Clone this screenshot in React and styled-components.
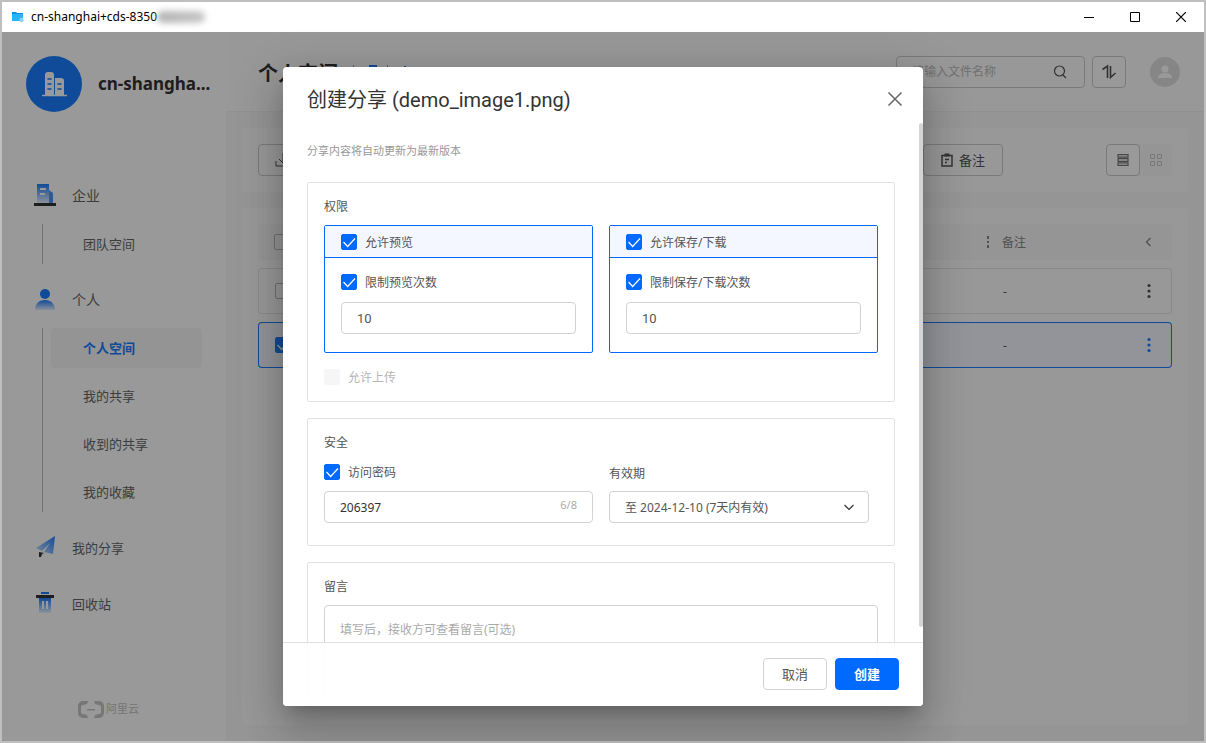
import React from "react";
import styled, { createGlobalStyle, css } from "styled-components";

const blue = "#006aff";
const dimBlue = "#1b7dff";

const Global = createGlobalStyle`
  *, *::before, *::after { box-sizing: border-box; }
  body {
    margin: 0;
    font-family: "Noto Sans", "Noto Sans CJK SC", sans-serif;
    font-size: 12px;
    color: #555;
  }
  button, input, select, textarea { font: inherit; color: inherit; }
  button { cursor: pointer; padding: 0; }
`;

/* ---------- window ---------- */
const Window = styled.div`
  display: flex;
  flex-direction: column;
  height: 100vh;
  border: 2px solid #bfbfbf;
  background: #fff;
`;
const TitleBar = styled.header`
  display: flex;
  align-items: center;
  flex: none;
  height: 30px;
  padding-left: 10px;
  color: #000;
`;
const WindowName = styled.span`
  margin-left: 7px;
  line-height: 20px;
`;
const Redacted = styled.span`
  width: 48px;
  height: 12px;
  border-radius: 6px;
  background: linear-gradient(90deg, #b4b4b4, #c6c6c6);
  filter: blur(3px);
`;
const WindowControls = styled.div`
  display: flex;
  margin-left: auto;
`;
const WindowButton = styled.button`
  display: grid;
  place-items: center;
  width: 46px;
  height: 30px;
  border: 0;
  background: none;
`;
const Body = styled.div`
  position: relative;
  display: flex;
  flex: 1;
  min-height: 0;
`;

/* ---------- sidebar ---------- */
const Sidebar = styled.aside`
  display: flex;
  flex-direction: column;
  flex: none;
  width: 224px;
  padding: 24px 24px 20px;
  background: #fff;
`;
const Account = styled.div`
  display: flex;
  align-items: center;
  gap: 16px;
  margin-bottom: 64px;
`;
const Badge = styled.span`
  display: grid;
  place-items: center;
  flex: none;
  width: 56px;
  height: 56px;
  border-radius: 50%;
  background: ${dimBlue};
`;
const AccountName = styled.strong`
  font-size: 17px;
  line-height: 24px;
  white-space: nowrap;
  color: #333;
`;
const NavLink = styled.a`
  display: flex;
  align-items: center;
  height: 40px;
  padding: 0 0 2px 6px;
  gap: 14px;
  font-size: ${(p) => (p.$large ? "14px" : "13px")};
  color: #666;
  text-decoration: none;
  & > svg { flex: none; }
`;
const SubNav = styled.div`
  display: flex;
  flex-direction: column;
  gap: 8px;
  margin: 8px 0 16px 16px;
  padding-left: 8px;
  border-left: 1px solid #bbb;
`;
const SubLink = styled.a`
  display: flex;
  align-items: center;
  height: 40px;
  padding: 0 0 2px 32px;
  border-radius: 4px;
  font-size: 13px;
  color: #666;
  text-decoration: none;
  ${(p) =>
    p.$active &&
    css`
      background: #f7f7f7;
      color: ${dimBlue};
      font-weight: 700;
    `}
`;
const NavSpacer = styled.div`
  height: 16px;
`;
const Brand = styled.div`
  display: flex;
  align-items: center;
  gap: 2px;
  margin-top: auto;
  padding-left: 52px;
  font-size: 11px;
  line-height: 24px;
  color: #c6c6c6;
`;

/* ---------- main area ---------- */
const Main = styled.main`
  display: flex;
  flex-direction: column;
  flex: 1;
  min-width: 0;
  background: #f8f8f8;
`;
const PageHeader = styled.div`
  display: flex;
  align-items: center;
  flex: none;
  height: 80px;
  padding: 0 24px 0 32px;
  border-bottom: 1px solid #f2f2f2;
  background: #fdfdfd;
`;
const PageTitle = styled.h1`
  margin: 0;
  padding-top: 4px;
  font-size: 20px;
  line-height: 28px;
  font-weight: 700;
  color: #333;
`;
const Search = styled.label`
  display: flex;
  align-items: center;
  width: 189px;
  height: 32px;
  margin-left: auto;
  padding: 0 16px 0 15px;
  border: 1px solid #ccc;
  border-radius: 4px;
  color: #555;
`;
const SearchInput = styled.input`
  flex: 1;
  min-width: 0;
  padding: 0;
  border: 0;
  outline: 0;
  background: none;
  &::placeholder { color: #bbb; opacity: 1; }
`;
const IconButton = styled.button`
  display: grid;
  place-items: center;
  width: 34px;
  height: 32px;
  flex: ${(p) => (p.$plain ? "1" : "none")};
  border: 1px solid ${(p) => (p.$plain ? "transparent" : "#ccc")};
  border-radius: 4px;
  background: ${(p) => (p.$plain ? "none" : "#fff")};
`;
const Avatar = styled.span`
  display: grid;
  place-items: center;
  width: 30px;
  height: 30px;
  border-radius: 50%;
  background: #e0e0e0;
`;
const HeaderTools = styled.div`
  display: flex;
  align-items: center;
  gap: 24px;
  margin-left: 7px;
`;
const Panels = styled.div`
  display: flex;
  flex-direction: column;
  flex: 1;
  gap: 16px;
  padding: 16px;
`;
const Panel = styled.section`
  padding: 16px;
  border-radius: 4px;
  background: #fefefe;
  flex: ${(p) => (p.$grow ? 1 : "none")};
`;
const Tools = styled.div`
  display: flex;
  align-items: center;
`;
const ToolButton = styled.button`
  display: flex;
  align-items: center;
  gap: 5px;
  width: 80px;
  height: 32px;
  padding: 0 16px;
  margin-left: ${(p) => (p.$end ? "auto" : 0)};
  border: 1px solid #ccc;
  border-radius: 4px;
  background: none;
  font-size: 13px;
  line-height: 20px;
  color: #555;
`;
const ViewSwitch = styled.div`
  display: flex;
  margin-left: 103px;
  width: 66px;
  border-radius: 4px;
  background: #f8f8f8;
`;
const FileTable = styled.table`
  width: 100%;
  margin-top: -8px;
  border-collapse: separate;
  border-spacing: 0 8px;
  table-layout: fixed;
`;
const Cell = styled.td`
  width: ${(p) => p.$w || "auto"};
  height: 46px;
  padding: 0 0 0 ${(p) => p.$pad || "0"};
  border: 0 solid ${(p) => (p.$active ? dimBlue : "#e6e6e6")};
  border-width: 1px 0;
  background: ${(p) => (p.$active ? "#f4f7ff" : "none")};
  color: ${(p) => (p.$active ? dimBlue : "#555")};
  &:first-child { border-left-width: 1px; border-radius: 4px 0 0 4px; }
  &:last-child { border-right-width: 1px; border-radius: 0 4px 4px 0; }
`;
const HeadCell = styled.th`
  width: ${(p) => p.$w || "auto"};
  height: 36px;
  padding: 0 0 0 ${(p) => p.$pad || "0"};
  background: #f8f8f8;
  font-weight: 400;
  text-align: left;
  color: #888;
  &:first-child { border-radius: 4px 0 0 4px; }
  &:last-child { border-radius: 0 4px 4px 0; }
`;
const CellLine = styled.span`
  display: flex;
  align-items: center;
  gap: 12px;
  color: ${(p) => (p.$dark ? "#555" : "inherit")};
`;
const CellButton = styled.button`
  display: grid;
  place-items: center;
  width: 100%;
  height: 24px;
  border: 0;
  background: none;
`;

/* ---------- dialog ---------- */
const Backdrop = styled.div`
  position: absolute;
  inset: 0;
  display: flex;
  justify-content: center;
  padding: 35px 16px;
  background: rgba(0, 0, 0, 0.4);
`;
const Dialog = styled.section`
  position: relative;
  display: flex;
  flex-direction: column;
  width: 100%;
  max-width: 640px;
  padding-bottom: 8px;
  border-radius: 4px;
  background: #fff;
  box-shadow: 0 11px 15px -7px rgba(0, 0, 0, 0.2), 0 24px 38px 3px rgba(0, 0, 0, 0.14),
    0 9px 46px 8px rgba(0, 0, 0, 0.12);
`;
const DialogHeader = styled.header`
  display: flex;
  align-items: center;
  justify-content: space-between;
  flex: none;
  height: 56px;
  padding: 8px 20px 0 24px;
`;
const DialogTitle = styled.h2`
  margin: 0;
  padding-top: 2px;
  font-family: Roboto, "Noto Sans CJK SC", sans-serif;
  font-size: 20px;
  line-height: 28px;
  font-weight: 400;
  color: #333;
`;
const CloseButton = styled.button`
  display: grid;
  place-items: center;
  width: 16px;
  height: 24px;
  border: 0;
  background: none;
`;
const DialogBody = styled.div`
  flex: 1;
  min-height: 0;
  overflow-y: auto;
  scrollbar-width: none;
  padding: 16px 28px 0 24px;
`;
const ScrollThumb = styled.span`
  position: absolute;
  top: 56px;
  right: 0;
  bottom: 79px;
  width: 4px;
  border-radius: 2px;
  background: #d4d4d4;
`;
const Tip = styled.p`
  margin: 0 0 19px;
  font-size: 11px;
  line-height: 24px;
  color: #999;
`;
const Group = styled.fieldset`
  min-width: 0;
  margin: 0 0 16px;
  padding: 14px 16px 13px;
  border: 1px solid #e2e2e2;
  border-radius: 2px;
`;
const GroupTitle = styled.h3`
  display: block;
  margin: 0 0 8px;
  font-size: 12px;
  line-height: 20px;
  font-weight: 400;
  color: #555;
`;
const Columns = styled.div`
  display: grid;
  grid-template-columns: 1fr 1fr;
  gap: 16px;
  margin-bottom: ${(p) => (p.$form ? "9px" : "13px")};
`;
const Option = styled.div`
  border: 1px solid ${blue};
  border-radius: 2px;
`;
const OptionHead = styled.div`
  display: flex;
  align-items: center;
  height: 32px;
  padding: 0 16px;
  border-bottom: 1px solid ${blue};
  background: #f4f7ff;
`;
const OptionBody = styled.div`
  padding: 13px 16px 18px;
`;
const CheckLabel = styled.label`
  display: flex;
  align-items: center;
  gap: 8px;
  height: 22px;
  line-height: 22px;
  color: ${(p) => (p.$off ? "#b5b5b5" : "#555")};
`;
const CheckText = styled.span`
  padding-top: 2px;
`;
const CheckBox = styled.span`
  position: relative;
  display: block;
  flex: none;
  width: 16px;
  height: 16px;
  & > svg {
    position: absolute;
    inset: 0;
    pointer-events: none;
  }
`;
const CheckInput = styled.input`
  display: block;
  appearance: none;
  width: 16px;
  height: 16px;
  margin: 0;
  border: 1px solid #bbb;
  border-radius: 2px;
  &:checked { border-color: ${(p) => p.$tone}; background: ${(p) => p.$tone}; }
  &:disabled { border-color: #f6f6f6; background: #f6f6f6; }
`;
const Field = styled.div`
  position: relative;
  width: 100%;
  margin-top: 9px;
`;
const TextInput = styled.input`
  display: block;
  width: 100%;
  height: 32px;
  padding: 0 15px;
  border: 1px solid #d2d2d2;
  border-radius: 4px;
  outline: 0;
  background: #fff;
  color: #333;
`;
const CountInput = styled(TextInput)`
  font-family: Roboto, sans-serif;
  font-size: 13px;
  color: #555;
`;
const Counter = styled.span`
  position: absolute;
  top: 4px;
  right: 16px;
  font-size: 11px;
  line-height: 20px;
  color: #aaa;
`;
const SelectField = styled(Field)`
  max-width: 260px;
  & > svg {
    position: absolute;
    top: 10px;
    right: 14px;
    pointer-events: none;
  }
`;
const Select = styled.select`
  display: block;
  appearance: none;
  width: 100%;
  height: 32px;
  padding: 0 32px 0 15px;
  border: 1px solid #d2d2d2;
  border-radius: 4px;
  background: #fff;
`;
const FieldLabel = styled.label`
  display: flex;
  height: 22px;
  line-height: 22px;
`;
const FormColumns = styled(Columns)`
  ${Field}, ${SelectField} { margin-top: 8px; }
`;
const Message = styled.textarea`
  display: block;
  width: 100%;
  height: 120px;
  padding: 14px 15px;
  border: 1px solid #d2d2d2;
  border-radius: 4px;
  resize: none;
  line-height: 20px;
  &::placeholder { color: #aaa; opacity: 1; }
`;
const DialogFooter = styled.footer`
  position: absolute;
  left: 0;
  right: 0;
  bottom: 0;
  display: flex;
  justify-content: flex-end;
  gap: 8px;
  height: 64px;
  padding: 15px 24px;
  border-top: 1px solid #e0e0e0;
  border-radius: 0 0 4px 4px;
  background: rgba(255, 255, 255, 0.9);
`;
const Action = styled.button`
  width: 64px;
  height: 32px;
  padding-bottom: 2px;
  border: 1px solid ${(p) => (p.$primary ? blue : "#d2d2d2")};
  border-radius: 4px;
  background: ${(p) => (p.$primary ? blue : "#fff")};
  color: ${(p) => (p.$primary ? "#fff" : "#555")};
  font-size: 13px;
  font-weight: ${(p) => (p.$primary ? 700 : 400)};
`;

/* ---------- drawings ---------- */
const Stroke = ({ size = 16, width = 1, children, color = "currentColor" }) => (
  <svg width={size} height={size} viewBox={`0 0 ${size} ${size}`} fill="none" stroke={color} strokeWidth={width} aria-hidden="true">
    {children}
  </svg>
);
const Fade = ({ id }) => (
  <linearGradient id={id} x1="0" y1="0" x2="0" y2="1">
    <stop offset="0" stopColor={dimBlue} />
    <stop offset="1" stopColor={dimBlue} stopOpacity="0.1" />
  </linearGradient>
);
const FolderIcon = () => (
  <svg width="12" height="12" viewBox="0 0 12 12" aria-hidden="true">
    <path d="M0 1h4l1 1h6v3H0z" fill="#0b8fe8" />
    <path d="M0 3h11v7H0z" fill="#29b3fb" />
    <circle cx="9.5" cy="9" r="2.2" fill="#8fd0ff" />
  </svg>
);
const CompanyIcon = () => (
  <svg width="26" height="26" viewBox="0 0 26 26" fill="none" stroke="#fff" aria-hidden="true">
    <path d="M4 24V4a3 3 0 0 1 3-3h3a3 3 0 0 1 3 3v20zM14 24V7h6a3 3 0 0 1 3 3v14z" fill="#fff" stroke="none" />
    <path d="M1 24.500h25" strokeWidth="1.500" />
    <path d="M13.500 7v16" stroke={dimBlue} />
    <path d="M7 8h3M7 13h3M7 18h3M17 13h3M17 18h3" stroke={dimBlue} strokeWidth="1.600" strokeLinecap="round" />
  </svg>
);
const EnterpriseIcon = () => (
  <svg width="26" height="24" viewBox="0 0 26 24" aria-hidden="true">
    <defs><Fade id="ent" /></defs>
    <path d="M17 7l4 3v10h-4z" fill={dimBlue} opacity=".8" />
    <path d="M5 1h12v19H5z" fill="url(#ent)" />
    <path d="M8 5h6v2H8zM8 10h5v2H8z" fill="#fff" />
    <path d="M2 20h22v3H2z" fill="#333" />
  </svg>
);
const PersonIcon = () => (
  <svg width="26" height="24" viewBox="0 0 26 24" aria-hidden="true">
    <defs><Fade id="per" /></defs>
    <circle cx="13" cy="7" r="5" fill={dimBlue} />
    <path d="M3 23c0-6 4-10 10-10s10 4 10 10z" fill="url(#per)" />
  </svg>
);
const PlaneIcon = () => (
  <svg width="26" height="24" viewBox="0 0 26 24" aria-hidden="true">
    <defs>
      <linearGradient id="pla" x1="1" y1="0" x2="0" y2="1">
        <stop offset="0" stopColor={dimBlue} />
        <stop offset="1" stopColor={dimBlue} stopOpacity="0.2" />
      </linearGradient>
    </defs>
    <path d="M23 1L4 13l6 3L18 8l-6 9 9 2z" fill="url(#pla)" />
    <path d="M7 17l5 1-2 1-1 3H7z" fill="#333" />
  </svg>
);
const TrashIcon = () => (
  <svg width="26" height="24" viewBox="0 0 26 24" aria-hidden="true">
    <defs><Fade id="tra" /></defs>
    <path d="M9 1h8v2H9z" fill={dimBlue} />
    <path d="M4 4h18v3H4z" fill="#333" />
    <path d="M7 7h12v15H7z" fill="url(#tra)" />
    <path d="M11 10v8M15 10v8" stroke="#fff" strokeWidth="2" />
  </svg>
);
const CloudLogo = () => (
  <svg width="26" height="17" viewBox="0 0 26 17" aria-hidden="true">
    <g fill="#c6c6c6">
      <path d="M10 0H5a5 5 0 0 0-5 5v7a5 5 0 0 0 5 5h5l-1-3-4-1a2 2 0 0 1-2-2V6a2 2 0 0 1 2-2l4-1z" />
      <path d="M16 0h5a5 5 0 0 1 5 5v7a5 5 0 0 1-5 5h-5l1-3 4-1a2 2 0 0 0 2-2V6a2 2 0 0 0-2-2l-4-1z" />
      <path d="M9 8h8v1.500H9z" />
    </g>
  </svg>
);
const SortIcon = () => (
  <Stroke size={16} width={1.6}>
    <path d="M1.500 5.500L6.500 2v12M9.500 2v11.500L14.500 9" />
  </Stroke>
);
const Dots = ({ small }) => (
  <svg width="4" height="16" viewBox="0 0 4 16" fill="currentColor" aria-hidden="true">
    {small ? (
      <path d="M1 2h2v3H1zM1 7h2v2H1zM1 11h2v3H1z" />
    ) : (
      <>
        <circle cx="2" cy="2.500" r="1.600" />
        <circle cx="2" cy="8" r="1.600" />
        <circle cx="2" cy="13.500" r="1.600" />
      </>
    )}
  </svg>
);

function Check({ tone = blue, ...rest }) {
  return (
    <CheckBox>
      <CheckInput type="checkbox" $tone={tone} {...rest} />
      {rest.defaultChecked && (
        <Stroke color="#fff" width={1.2}><path d="M2.500 8l4.200 4.500L14 4.500" /></Stroke>
      )}
    </CheckBox>
  );
}

function LabelledCheck({ text, off }) {
  return (
    <CheckLabel $off={off}>
      <Check defaultChecked={!off} disabled={off} />
      <CheckText>{text}</CheckText>
    </CheckLabel>
  );
}

function LimitOption({ title, limit }) {
  return (
    <Option>
      <OptionHead><LabelledCheck text={title} /></OptionHead>
      <OptionBody>
        <LabelledCheck text={limit} />
        <Field><CountInput aria-label={limit} defaultValue="10" /></Field>
      </OptionBody>
    </Option>
  );
}

function FileRow({ active = false }) {
  return (
    <tr>
      <Cell $active={active} $w="48px" $pad="16px">
        <Check tone={dimBlue} defaultChecked={active} aria-label="选择" />
      </Cell>
      <Cell $active={active} />
      <Cell $active={active} $w="140px" $pad="17px"><CellLine $dark>-</CellLine></Cell>
      <Cell $active={active} $w="46px"><CellButton aria-label="更多"><Dots /></CellButton></Cell>
    </tr>
  );
}

const personalLinks = ["个人空间", "我的共享", "收到的共享", "我的收藏"];

export default function App() {
  return (
    <Window>
      <Global />
      <TitleBar>
        <FolderIcon />
        <WindowName>cn-shanghai+cds-8350</WindowName>
        <Redacted />
        <WindowControls>
          <WindowButton aria-label="最小化"><Stroke size={10}><path d="M0 5.500h10" /></Stroke></WindowButton>
          <WindowButton aria-label="最大化"><Stroke size={10}><path d="M.5.5h9v9h-9z" /></Stroke></WindowButton>
          <WindowButton aria-label="关闭"><Stroke size={10} width={1.2}><path d="M0 0l10 10M10 0L0 10" /></Stroke></WindowButton>
        </WindowControls>
      </TitleBar>
      <Body>
        <Sidebar>
          <Account>
            <Badge><CompanyIcon /></Badge>
            <AccountName>cn-shangha...</AccountName>
          </Account>
          <nav>
            <NavLink href="#" $large><EnterpriseIcon />企业</NavLink>
            <SubNav><SubLink href="#">团队空间</SubLink></SubNav>
            <NavLink href="#" $large><PersonIcon />个人</NavLink>
            <SubNav>
              {personalLinks.map((name, i) => (
                <SubLink key={name} href="#" $active={i === 0}>{name}</SubLink>
              ))}
            </SubNav>
            <NavLink href="#"><PlaneIcon />我的分享</NavLink>
            <NavSpacer />
            <NavLink href="#"><TrashIcon />回收站</NavLink>
          </nav>
          <Brand><CloudLogo />阿里云</Brand>
        </Sidebar>
        <Main>
          <PageHeader>
            <PageTitle>个人空间</PageTitle>
            <svg width="72" height="16" viewBox="0 0 72 16" fill="none" aria-hidden="true">
              <path d="M15.500 1v14M49.500 1v14" stroke="#999" />
              <path d="M32 2h6v12h-6zM67 2v12" stroke={dimBlue} strokeWidth="2" />
            </svg>
            <Search>
              <SearchInput aria-label="搜索" placeholder="请输入文件名称" />
              <Stroke size={16} width={1.2}><circle cx="7.500" cy="7" r="5" /><path d="M11 11l3 3" /></Stroke>
            </Search>
            <HeaderTools>
              <IconButton aria-label="排序"><SortIcon /></IconButton>
              <Avatar>
                <svg width="16" height="16" viewBox="0 0 16 16" fill="#fff" aria-hidden="true">
                  <circle cx="8" cy="5" r="3.600" /><path d="M1 14c0-3 3-5 7-5s7 2 7 5z" />
                </svg>
              </Avatar>
            </HeaderTools>
          </PageHeader>
          <Panels>
            <Panel>
              <Tools>
                <ToolButton aria-label="下载">
                  <Stroke><path d="M8 1v9M4 7l4 4 4-4M1 9v5h14V9" /></Stroke>
                </ToolButton>
                <ToolButton $end>
                  <Stroke size={14} width={1.5}><path d="M2 2.500h10v10.500H2zM5 6.500h4M5 9.500h2" /><path d="M4.500 2h5" strokeWidth="3" /></Stroke>
                  备注
                </ToolButton>
                <ViewSwitch>
                  <IconButton aria-label="列表">
                    <Stroke size={12} width={1.2} color="#777"><path d="M1 .6h10v2.600H1zM1 4.700h10v2.600H1zM1 8.800h10v2.600H1z" /></Stroke>
                  </IconButton>
                  <IconButton $plain aria-label="网格">
                    <Stroke size={12} color="#c8c8c8"><path d="M.5.5h4v4h-4zM7.500.5h4v4h-4zM.5 7.500h4v4h-4zM7.500 7.500h4v4h-4z" /></Stroke>
                  </IconButton>
                </ViewSwitch>
              </Tools>
            </Panel>
            <Panel $grow>
              <FileTable>
                <thead>
                  <tr>
                    <HeadCell $w="48px" $pad="16px"><Check aria-label="全选" /></HeadCell>
                    <HeadCell />
                    <HeadCell $w="140px"><CellLine><Dots small />备注</CellLine></HeadCell>
                    <HeadCell $w="46px">
                      <CellButton aria-label="收起"><Stroke size={10} color="#888" width={1.3}><path d="M6.500 1l-4 4 4 4" /></Stroke></CellButton>
                    </HeadCell>
                  </tr>
                </thead>
                <tbody>
                  <FileRow />
                  <FileRow active />
                </tbody>
              </FileTable>
            </Panel>
          </Panels>
        </Main>
        <Backdrop>
          <Dialog role="dialog" aria-labelledby="share-title">
            <DialogHeader>
              <DialogTitle id="share-title">创建分享 (demo_image1.png)</DialogTitle>
              <CloseButton aria-label="关闭">
                <Stroke width={1.5} color="#666"><path d="M1.500 1.500l13 13M14.500 1.500l-13 13" /></Stroke>
              </CloseButton>
            </DialogHeader>
            <DialogBody>
              <Tip>分享内容将自动更新为最新版本</Tip>
              <Group>
                <GroupTitle>权限</GroupTitle>
                <Columns>
                  <LimitOption title="允许预览" limit="限制预览次数" />
                  <LimitOption title="允许保存/下载" limit="限制保存/下载次数" />
                </Columns>
                <LabelledCheck off text="允许上传" />
              </Group>
              <Group>
                <GroupTitle>安全</GroupTitle>
                <FormColumns $form>
                  <div>
                    <LabelledCheck text="访问密码" />
                    <Field>
                      <TextInput aria-label="访问密码" defaultValue="206397" />
                      <Counter>6/8</Counter>
                    </Field>
                  </div>
                  <div>
                    <FieldLabel htmlFor="expiry"><CheckText>有效期</CheckText></FieldLabel>
                    <SelectField>
                      <Select id="expiry"><option>至 2024-12-10 (7天内有效)</option></Select>
                      <Stroke size={12} width={1.2} color="#333"><path d="M1.500 4L6 8.500 10.500 4" /></Stroke>
                    </SelectField>
                  </div>
                </FormColumns>
              </Group>
              <Group>
                <GroupTitle as="label" htmlFor="message">留言</GroupTitle>
                <Message id="message" placeholder="填写后，接收方可查看留言(可选)" />
              </Group>
            </DialogBody>
            <ScrollThumb />
            <DialogFooter>
              <Action>取消</Action>
              <Action $primary>创建</Action>
            </DialogFooter>
          </Dialog>
        </Backdrop>
      </Body>
    </Window>
  );
}
